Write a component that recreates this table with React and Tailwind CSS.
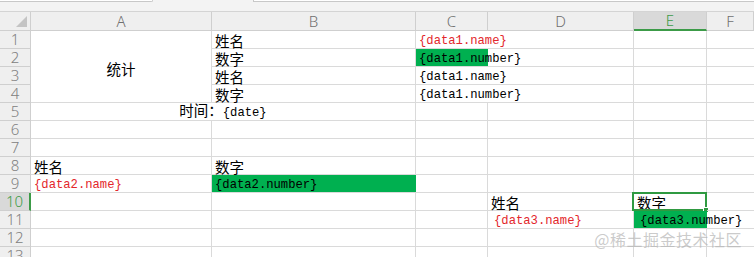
const zh = "font-['Noto_Sans_CJK_SC',sans-serif] text-[14.5px]";
const mono = 'font-mono text-[12.2px]';
const red = 'text-[#e3262b]';
const fill = 'bg-[#00b050]';

function Cell({ className = '', align = 'items-end', children }) {
    return (
        <div className={`relative flex ${align} whitespace-nowrap border-[#dadada] px-[3px] leading-[14px] ${className}`}>
            {children}
        </div>
    );
}

function ColHead({ label, active }) {
    return (
        <div
            className={`flex items-center justify-center border-r border-b font-['Noto_Sans',sans-serif] text-[15px] font-light ${
                active
                    ? 'border-b-2 border-r-[#cfcfcf] border-b-[#3c9b48] bg-[#d9d9d9] text-[#3c9b48]'
                    : 'border-[#cfcfcf] bg-[#efefef] text-[#707070]'
            }`}
        >
            {label}
        </div>
    );
}

function RowHead({ n, active }) {
    return (
        <div
            className={`flex items-center justify-center border-b font-['Noto_Sans',sans-serif] text-[15px] font-light leading-none ${
                active
                    ? 'border-r-2 border-b-[#cfcfcf] border-r-[#3c9b48] bg-[#d9d9d9] text-[#3c9b48]'
                    : 'border-r border-[#cfcfcf] bg-[#efefef] text-[#808080]'
            }`}
        >
            {n}
        </div>
    );
}

function EmptyRow({ n }) {
    return (
        <>
            <RowHead n={n} />
            <Cell className="border-r border-b" />
            <Cell className="border-r border-b" />
            <Cell className="border-r border-b" />
            <Cell className="border-r border-b" />
            <Cell className="border-r border-b" />
            <Cell className="border-b" />
        </>
    );
}

export default function App() {
    const cols = ['A', 'B', 'C', 'D', 'E', 'F'];

    return (
        <div className="relative h-[257px] w-[754px] overflow-hidden bg-white text-black">
            {/* formula bar edge */}
            <div className="flex h-[12px] border-b border-[#d4d4d4] bg-[#f3f3f3]">
                <div className="h-[2px] w-[153px] rounded-br-[3px] border-r border-b border-[#c8c8c8] bg-white" />
                <div className="ml-[100px] h-[2px] flex-1 border-b border-l border-[#c8c8c8] bg-white" />
            </div>

            <div className="grid grid-cols-[31px_181px_204px_72px_146px_73px_47px] grid-rows-[19px_repeat(13,18px)]">
                {/* corner */}
                <div className="relative border-r border-b border-[#cfcfcf] bg-[#efefef]">
                    <svg className="absolute right-[3px] bottom-[3px]" width="11" height="11" viewBox="0 0 11 11">
                        <path d="M11 0 L11 11 L0 11 Z" fill="#c4c4c4" />
                    </svg>
                </div>
                {cols.map(c => (
                    <ColHead key={c} label={c} active={c === 'E'} />
                ))}

                {/* rows 1-4 */}
                <RowHead n={1} />
                <Cell align="items-center justify-center" className={`row-span-4 border-r border-b ${zh}`}>
                    <span className="mt-[4px]">统计</span>
                </Cell>
                <Cell className={`border-r border-b ${zh}`}>姓名</Cell>
                <Cell className={`border-b ${mono} ${red}`}>{'{data1.name}'}</Cell>
                <Cell className="border-r border-b" />
                <Cell className="border-r border-b" />
                <Cell className="border-b" />

                <RowHead n={2} />
                <Cell className={`border-r border-b ${zh}`}>数字</Cell>
                <Cell className={`border-b ${fill} ${mono}`}>{'{data1.number}'}</Cell>
                <Cell className="border-r border-b" />
                <Cell className="border-r border-b" />
                <Cell className="border-b" />

                <RowHead n={3} />
                <Cell className={`border-r border-b ${zh}`}>姓名</Cell>
                <Cell className={`border-b ${mono}`}>{'{data1.name}'}</Cell>
                <Cell className="border-r border-b" />
                <Cell className="border-r border-b" />
                <Cell className="border-b" />

                <RowHead n={4} />
                <Cell className={`border-r border-b ${zh}`}>数字</Cell>
                <Cell className={`border-b ${mono}`}>{'{data1.number}'}</Cell>
                <Cell className="border-r border-b" />
                <Cell className="border-r border-b" />
                <Cell className="border-b" />

                {/* row 5: merged A:B */}
                <RowHead n={5} />
                <Cell align="items-end justify-center" className="col-span-2 border-r border-b">
                    <span>
                        <span className={zh}>时间：</span>
                        <span className={mono}>{'{date}'}</span>
                    </span>
                </Cell>
                <Cell className="border-r border-b" />
                <Cell className="border-r border-b" />
                <Cell className="border-r border-b" />
                <Cell className="border-b" />

                <EmptyRow n={6} />
                <EmptyRow n={7} />

                {/* row 8 */}
                <RowHead n={8} />
                <Cell className={`border-r border-b ${zh}`}>姓名</Cell>
                <Cell className={`border-r border-b ${zh}`}>数字</Cell>
                <Cell className="border-r border-b" />
                <Cell className="border-r border-b" />
                <Cell className="border-r border-b" />
                <Cell className="border-b" />

                {/* row 9 */}
                <RowHead n={9} />
                <Cell className={`border-r border-b ${mono} ${red}`}>{'{data2.name}'}</Cell>
                <Cell className={`border-b ${fill} ${mono}`}>{'{data2.number}'}</Cell>
                <Cell className="border-r border-b" />
                <Cell className="border-r border-b" />
                <Cell className="border-r border-b" />
                <Cell className="border-b" />

                {/* row 10 */}
                <RowHead n={10} active />
                <Cell className="border-r border-b" />
                <Cell className="border-r border-b" />
                <Cell className="border-r border-b" />
                <Cell className={`border-r border-b ${zh}`}>姓名</Cell>
                <Cell className={`border-r border-b ${zh}`}>
                    数字
                    {/* active cell frame + fill handle */}
                    <div className="pointer-events-none absolute -top-[1px] -left-[2px] -right-[1px] -bottom-[1px] border-2 border-[#2f9a41]" />
                    <div className="absolute -right-[3px] -bottom-[3px] h-[6px] w-[6px] border border-white bg-[#2f9a41]" />
                </Cell>
                <Cell className="border-b" />

                {/* row 11 */}
                <RowHead n={11} />
                <Cell className="border-r border-b" />
                <Cell className="border-r border-b" />
                <Cell className="border-r border-b" />
                <Cell className={`border-r border-b pl-[6px] ${mono} ${red}`}>{'{data3.name}'}</Cell>
                <Cell className={`border-b ${fill} pl-[6px] ${mono}`}>{'{data3.number}'}</Cell>
                <Cell className="border-b" />

                <EmptyRow n={12} />
                <EmptyRow n={13} />
            </div>

            <div className="absolute right-[12px] bottom-[10px] font-['Noto_Sans_CJK_SC',sans-serif] text-[16px] leading-none tracking-[0.5px] text-[#b4b4b4]/70">
                @稀土掘金技术社区
            </div>
        </div>
    );
}
